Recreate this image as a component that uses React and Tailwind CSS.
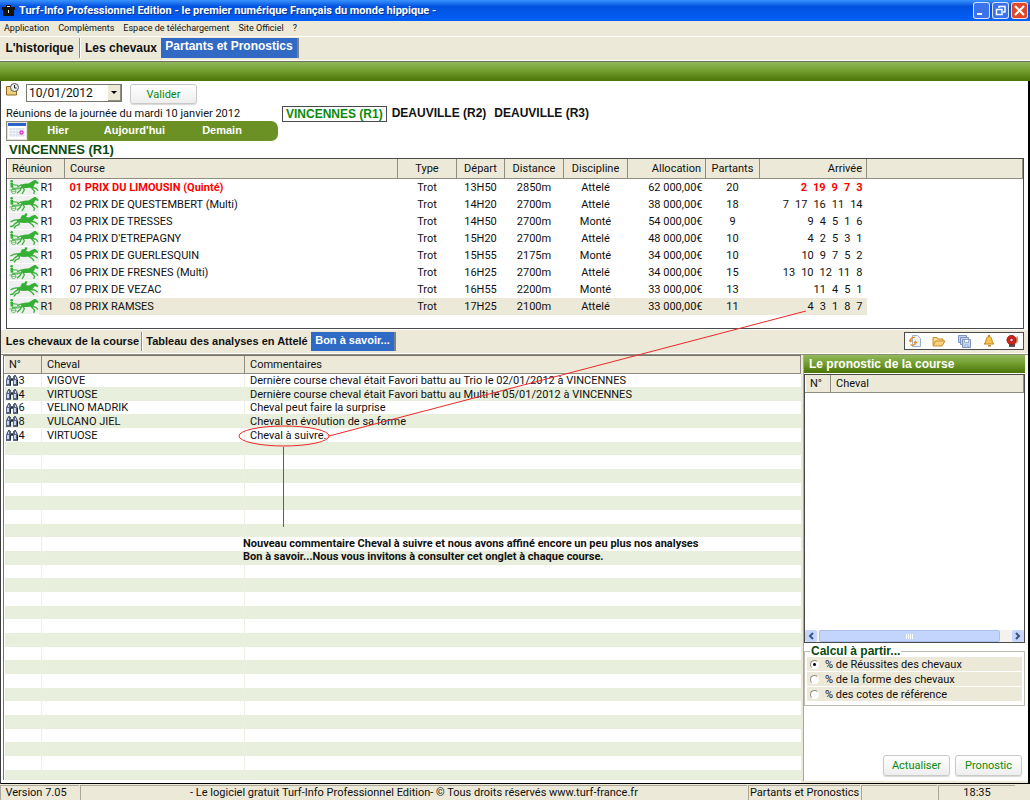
import React, { useState } from "react";

const RACES = [
  { n: "01 PRIX DU LIMOUSIN (Quinté)", start: "13H50", dist: "2850m", disc: "Attelé", purse: "62 000,00€", runners: "20", finish: [2, 19, 9, 7, 3], hot: true },
  { n: "02 PRIX DE QUESTEMBERT (Multi)", start: "14H20", dist: "2700m", disc: "Attelé", purse: "38 000,00€", runners: "18", finish: [7, 17, 16, 11, 14] },
  { n: "03 PRIX DE TRESSES", start: "14H50", dist: "2700m", disc: "Monté", purse: "54 000,00€", runners: "9", finish: [9, 4, 5, 1, 6] },
  { n: "04 PRIX D'ETREPAGNY", start: "15H20", dist: "2700m", disc: "Attelé", purse: "48 000,00€", runners: "10", finish: [4, 2, 5, 3, 1] },
  { n: "05 PRIX DE GUERLESQUIN", start: "15H55", dist: "2175m", disc: "Monté", purse: "34 000,00€", runners: "10", finish: [10, 9, 7, 5, 2] },
  { n: "06 PRIX DE FRESNES (Multi)", start: "16H25", dist: "2700m", disc: "Attelé", purse: "34 000,00€", runners: "15", finish: [13, 10, 12, 11, 8] },
  { n: "07 PRIX DE VEZAC", start: "16H55", dist: "2200m", disc: "Monté", purse: "33 000,00€", runners: "13", finish: [11, 4, 5, 1] },
  { n: "08 PRIX RAMSES", start: "17H25", dist: "2100m", disc: "Attelé", purse: "33 000,00€", runners: "11", finish: [4, 3, 1, 8, 7], selected: true },
];

const NOTES = [
  ["3", "VIGOVE", "Dernière course cheval était Favori battu au Trio le 02/01/2012 à VINCENNES"],
  ["4", "VIRTUOSE", "Dernière course cheval était Favori battu au Multi le 05/01/2012 à VINCENNES"],
  ["6", "VELINO MADRIK", "Cheval peut faire la surprise"],
  ["8", "VULCANO JIEL", "Cheval en évolution de sa forme"],
  ["4", "VIRTUOSE", "Cheval à suivre."],
];

const BASES = ["% de Réussites des chevaux", "% de la forme des chevaux", "% des cotes de référence"];

function Trotter() {
  return (
    <svg viewBox="0 0 90 48" className="block h-4 w-[30px] bg-[#f0f0f0]" aria-hidden="true">
      <g fill="#35b035">
        <circle cx="8" cy="7" r="4" />
        <ellipse cx="53" cy="20" rx="18" ry="6.500" />
        <path d="M56 15L70 7L76 3L80 3L89 11L87 15L79 13L72 26L62 26Z" />
      </g>
      <g fill="none" stroke="#35b035" strokeLinejoin="round">
        <path d="M8 12L9 26" strokeWidth="8" />
        <path d="M10 17L28 19M9 28L30 27L58 25" strokeWidth="3" />
        <path d="M38 17L30 21L25 24" strokeWidth="4" />
        <path d="M41 22L46 33L39 45M39 22L34 34L24 43M67 24L81 28L87 35M66 25L77 37L74 44" strokeWidth="4" />
        <circle cx="14" cy="37" r="7" strokeWidth="2" />
        <path d="M7 37H21M1 33L34 29" strokeWidth="2" />
      </g>
    </svg>
  );
}

function Rider() {
  return (
    <svg viewBox="0 0 90 48" className="block h-4 w-[30px] bg-[#f0f0f0]" aria-hidden="true">
      <g fill="#35b035">
        <circle cx="51" cy="5" r="4" />
        <path d="M34 16L39 7L48 6L53 12L62 15L60 18L50 17L52 26L46 26L42 20Z" />
        <ellipse cx="45" cy="23" rx="22" ry="7" />
        <path d="M54 17L68 9L75 6L79 6L88 14L86 18L77 16L68 28L56 29Z" />
      </g>
      <g fill="none" stroke="#35b035" strokeWidth="4" strokeLinejoin="round">
        <path d="M26 20L14 22L4 27" />
        <path d="M28 25L18 32L12 39L3 41M31 27L30 35L20 39L15 46" />
        <path d="M62 25L77 27L86 34M59 27L70 35L75 42" />
      </g>
    </svg>
  );
}

function Binoculars() {
  return (
    <svg viewBox="0 0 14 12" className="block h-3 w-[14px] shrink-0" aria-hidden="true">
      <path d="M3 1h2v1h1v2h2V2h1V1h2v1l1 1 1 3v6H8V7H6v5H1V6l1-3 1-1z" fill="#59647c" />
      <path d="M2 6h2v4H2zM9 6h2v4H9zM3 3h1v2H3zM10 3h1v2h-1z" fill="#c4d5f5" />
      <path d="M5 6h1v5H5zM12 6h1v5h-1zM6 5h2v1H6z" fill="#1d2432" />
    </svg>
  );
}

function CaptionButton({ children, label, tone }) {
  return (
    <button type="button" aria-label={label} className={`flex h-[17px] w-[17px] items-center justify-center rounded-[3px] border border-white/80 ${tone}`}>
      <svg viewBox="0 0 13 13" className="h-[13px] w-[13px]" fill="none" stroke="#fff" strokeWidth="2">
        {children}
      </svg>
    </button>
  );
}

const FRAME = "border border-[#4a4a4a]";
const HEAD = "border-r border-b border-[#8f8d80] border-l border-l-white font-normal";
const GREEN = "bg-linear-to-b from-[#92b95a] via-[#709c2c] to-[#4c7404]";
const BTN = "rounded-[3px] border border-[#c9c9c9] bg-linear-to-b from-white to-[#eeeeee] text-[#0a8a0a] shadow-[0_1px_1px_#d8d8d8]";
const ACTIVE = "bg-[#316ac5] text-white border-r-2 border-[#77818f]";
const BOLD = "font-['Liberation_Sans',sans-serif] font-bold";

export default function App() {
  const [base, setBase] = useState(0);
  const rows = Array.from({ length: 30 }, (_, i) => NOTES[i] || ["", "", ""]);

  return (
    <div className="relative flex min-h-screen flex-col overflow-hidden bg-[#ece9d8] font-[Roboto,sans-serif] text-[11px] leading-[13px] text-[#111]">
      <header className="flex h-[21px] items-center gap-1 bg-linear-to-b from-[#3a93ff] via-[#0352de] via-30% to-[#0060f8] pr-[2px] pl-[2px] text-white">
        <svg viewBox="0 0 13 11" className="h-[11px] w-[13px]" aria-hidden="true">
          <path d="M0 2h4V0h5v2h4v3H0zM1 5h11v6H1z" fill="#16130e" />
          <path d="M5 1h3v1H5zM6 5h1v3H6z" fill="#e8e2c8" />
        </svg>
        <h1 className="flex-1 text-[11px] font-bold whitespace-nowrap [text-shadow:1px_1px_0_#06308c]">
          Turf-Info Professionnel Edition - le premier numérique Français du monde hippique -
        </h1>
        <div className="flex gap-[2px]">
          <CaptionButton label="Réduire" tone="bg-[#3d73ea]"><path d="M2 10h5" /></CaptionButton>
          <CaptionButton label="Restaurer" tone="bg-[#3d73ea]"><path d="M5 4V2.500h6V8H9M2.500 5.500h5.500v5H2.500z" strokeWidth="1.400" /></CaptionButton>
          <CaptionButton label="Fermer" tone="bg-[#e0482a]"><path d="M2 2l9 9M11 2l-9 9" /></CaptionButton>
        </div>
      </header>

      <nav className="flex h-4 items-center gap-[9px] border-b border-white pl-1 text-[9px] whitespace-nowrap">
        {["Application", "Complèments", "Espace de téléchargement", "Site Officiel", "?"].map((m) => (
          <button type="button" key={m}>{m}</button>
        ))}
      </nav>

      <div className={`flex h-[24px] items-start border-b border-white pt-px text-[12px] whitespace-nowrap ${BOLD}`}>
        <button type="button" className="h-[20px] w-[80px] border-r border-[#8f8d80] text-center">L'historique</button>
        <button type="button" className="h-[20px] w-[81px] border-l border-white text-center">Les chevaux</button>
        <button type="button" className={`h-[20px] w-[138px] pb-[3px] text-center ${ACTIVE}`}>Partants et Pronostics</button>
      </div>
      <div className={`h-5 border-t border-[#6f7060] ${GREEN}`} />

      <main className="flex flex-1 flex-col border-r-2 border-l border-black border-l-[#3c3c3c] bg-white">
        <div className="flex h-[77px] pl-[5px]">
          <section className="w-[276px]">
            <div className="flex items-start gap-[7px] pt-[2px]">
              <svg viewBox="0 0 13 13" className="h-[13px] w-[13px]" aria-hidden="true">
                <path d="M.5 3.500h4l1 1.500h5v7H.5z" fill="#f2cf79" stroke="#8a6a24" />
                <circle cx="8.500" cy="4.500" r="4" fill="#e9eef5" stroke="#555" />
                <path d="M8.500 2v3h2" fill="none" stroke="#222" />
              </svg>
              <div className="relative flex items-start gap-2 pt-px">
                <select aria-label="Date" className="h-[18px] w-[96px] appearance-none border border-[#7a786c] bg-white pl-[2px] text-[12px] leading-4">
                  <option>10/01/2012</option>
                </select>
                <span className="pointer-events-none absolute top-[2px] left-[82px] flex h-4 w-[13px] items-center justify-center border-r border-b border-[#8f8d80] bg-[#ece9d8]">
                  <svg viewBox="0 0 6 3" className="h-[3px] w-[6px]"><path d="M0 0h6L3 3z" /></svg>
                </span>
                <button type="button" className={`h-[20px] w-[67px] ${BTN}`}>Valider</button>
              </div>
            </div>
            <p className="pt-[2px] leading-[15px] whitespace-nowrap">Réunions de la journée du mardi 10 janvier 2012</p>
            <div className="flex h-[20px] w-[272px]">
              <span className="flex w-[22px] items-center justify-center border border-[#8f8d80] bg-[#e4e2d8]">
                <svg viewBox="0 0 18 16" className="h-4 w-[18px]" aria-hidden="true">
                  <path d="M0 0h18v16H0z" fill="#fff" />
                  <path d="M0 0h18v3H0z" fill="#2b62c9" />
                  <path d="M3 5v9M6 5v9M9 5v9M12 5v9M15 5v9M1 6h16M1 9h16M1 12h16" stroke="#d3d8e8" fill="none" />
                  <circle cx="13.500" cy="9.500" r="1.500" fill="#fff" stroke="#e040d0" strokeWidth="1.500" />
                </svg>
              </span>
              <div className={`flex flex-1 items-center rounded-r-[7px] bg-[#6b9023] pb-px text-white ${BOLD}`}>
                <button type="button" className="w-[60px]">Hier</button>
                <button type="button" className="w-[93px]">Aujourd'hui</button>
                <button type="button" className="w-[82px]">Demain</button>
              </div>
            </div>
            <h2 className={`pl-[3px] text-[13px] leading-[17px] text-[#0b4a0b] ${BOLD}`}>VINCENNES (R1)</h2>
          </section>
          <div className={`flex items-start gap-[5px] pt-[25px] text-[12px] leading-[14px] ${BOLD}`}>
            <button type="button" className={`px-[3px] text-[#0b8a0b] ${FRAME}`}>VINCENNES (R1)</button>
            <button type="button" className="pr-[3px]">DEAUVILLE (R2)</button>
            <button type="button">DEAUVILLE (R3)</button>
          </div>
        </div>

        <div className={`mr-[4px] ml-[5px] h-[171px] ${FRAME}`}>
          <table className="w-full table-fixed border-collapse whitespace-nowrap">
            <colgroup>
              <col className="w-[57px]" /><col className="w-[333px]" /><col className="w-[59px]" /><col className="w-[48px]" />
              <col className="w-[59px]" /><col className="w-[64px]" /><col className="w-[78px]" /><col className="w-[54px]" />
              <col className="w-[107px]" /><col />
            </colgroup>
            <thead>
              <tr className="h-[19px] bg-[#ece9d8]">
                <th className={`pl-1 text-left ${HEAD}`}>Réunion</th>
                <th className={`pl-[5px] text-left ${HEAD}`}>Course</th>
                <th className={HEAD}>Type</th>
                <th className={HEAD}>Départ</th>
                <th className={HEAD}>Distance</th>
                <th className={HEAD}>Discipline</th>
                <th className={`pr-1 text-right ${HEAD}`}>Allocation</th>
                <th className={HEAD}>Partants</th>
                <th className={`pr-1 text-right ${HEAD}`}>Arrivée</th>
                <th className={HEAD}></th>
              </tr>
            </thead>
            <tbody>
              {RACES.map((r) => {
                const cell = r.selected ? "bg-[#ece9d8]" : "";
                const hot = r.hot ? "font-bold text-[#f00]" : "";
                return (
                  <tr key={r.n} className="h-[17px] text-center">
                    <td className="p-0">
                      <div className="flex items-center pl-px">
                        {r.disc === "Monté" ? <Rider /> : <Trotter />}
                        <span className={`flex-1 pl-[2px] text-left leading-[17px] ${cell}`}>R1</span>
                      </div>
                    </td>
                    <td className={`pl-[5px] text-left ${cell} ${hot}`}>{r.n}</td>
                    <td className={cell}>Trot</td>
                    <td className={cell}>{r.start}</td>
                    <td className={cell}>{r.dist}</td>
                    <td className={cell}>{r.disc}</td>
                    <td className={`pr-[3px] text-right ${cell}`}>{r.purse}</td>
                    <td className={cell}>{r.runners}</td>
                    <td className={`pr-1 ${cell} ${hot}`}>
                      <div className="flex justify-end gap-[6px]">
                        {r.finish.map((f) => <span key={f}>{f}</span>)}
                      </div>
                    </td>
                    <td></td>
                  </tr>
                );
              })}
            </tbody>
          </table>
        </div>

        <div className={`mt-px flex h-[24px] items-start justify-between border-b border-white bg-[#ece9d8] pt-[2px] pr-[4px] whitespace-nowrap ${BOLD}`}>
          <div className="flex">
            <button type="button" className="h-[19px] w-[141px] border-r border-[#8f8d80] pl-[3px] text-center">Les chevaux de la course</button>
            <button type="button" className="h-[19px] w-[169px] border-l border-white text-center">Tableau des analyses en Attelé</button>
            <button type="button" className={`h-[19px] w-[85px] pb-[2px] text-center ${ACTIVE}`}>Bon à savoir...</button>
          </div>
          <div className={`flex h-[18px] w-[120px] items-center justify-between bg-white px-1 ${FRAME}`}>
            <button type="button" aria-label="Actualiser les données">
              <svg viewBox="0 0 12 12" className="h-3 w-3"><path d="M3.500.5h5l3 3v8h-8z" fill="#eef3fb" stroke="#9fb0cc" /><path d="M6 2.500C3 2 1 4 1.500 6M0 5l1.500 1.500L3 5M1.500 9.500c2 1.500 5 .5 5-2M5 8l1.500-1.500L8 8" fill="none" stroke="#e0912a" strokeWidth="1.300" /></svg>
            </button>
            <button type="button" aria-label="Ouvrir">
              <svg viewBox="0 0 14 11" className="h-[11px] w-[14px]"><path d="M1 9.500v-8h4l1 1.500h5v2" fill="#fbdc93" stroke="#c98c2b" /><path d="M1 10l2.500-5h9.500l-3 5z" fill="#fdd27a" stroke="#c98c2b" /></svg>
            </button>
            <button type="button" aria-label="Enregistrer tout">
              <svg viewBox="0 0 14 13" className="h-[13px] w-[14px]" fill="#c4d4f0" stroke="#7f95bf"><path d="M.5.5h8v7h-8z" /><path d="M2.500 2.500h8v7h-8z" /><path d="M4.500 4.500h8v8h-8z" /><path d="M6.500 4.500h4v3h-4zM7 10h3v2H7z" fill="#fff" strokeWidth=".7" /></svg>
            </button>
            <button type="button" aria-label="Alerte">
              <svg viewBox="0 0 12 12" className="h-3 w-3"><path d="M1 9c2-1 1.500-3 2.500-5.500C4 2 5 1.500 6 1.500S8 2 8.500 3.500C9.500 6 9 8 11 9z" fill="#f7c34c" stroke="#bf8420" /><path d="M5 0h2v2H5zM5 10h3v1.500H5z" fill="#bf8420" /></svg>
            </button>
            <button type="button" aria-label="Alarme">
              <svg viewBox="0 0 13 12" className="h-3 w-[13px]"><path d="M3 9h6v3H3z" fill="#555" /><path d="M9 3l3-2v6l-3 3z" fill="#d9a06a" /><circle cx="5.500" cy="5" r="4.500" fill="#e0221c" stroke="#8f1410" /><circle cx="5.500" cy="5" r="1.800" fill="#f9c9c0" stroke="#701010" strokeWidth=".8" /></svg>
            </button>
          </div>
        </div>

        <div className="flex flex-1 border-t border-b border-t-[#8f8d80] border-b-black bg-[#ece9d8]">
          <div className="min-w-0 flex-1 bg-white pl-[2px]">
            <div className="mb-[3px] border-t border-l border-[#77756a]">
              <table className="w-full table-fixed border-collapse whitespace-nowrap">
                <colgroup><col className="w-[37px]" /><col className="w-[203px]" /><col /></colgroup>
                <thead>
                  <tr className="h-[17px] bg-[#ece9d8] text-left">
                    <th className={`p-0 pl-1 ${HEAD}`}>N°</th>
                    <th className={`p-0 pl-[5px] ${HEAD}`}>Cheval</th>
                    <th className={`p-0 pl-[5px] ${HEAD}`}>Commentaires</th>
                  </tr>
                </thead>
                <tbody>
                  {rows.map(([num, horse, note], i) => (
                    <tr key={i} className="h-[14px] leading-[13px] odd:bg-white even:bg-[#e8efdc] nth-[3n]:h-[13px] last:h-[10px]!">
                      <td className="border-r border-[#efeee2] p-0">{num && <div className="flex items-center"><Binoculars />{num}</div>}</td>
                      <td className="border-r border-[#efeee2] p-0 pl-[5px]">{horse}</td>
                      <td className="p-0 pl-[5px]">{note}</td>
                    </tr>
                  ))}
                </tbody>
              </table>
            </div>
          </div>

          <aside className="mb-[2px] ml-[2px] flex w-[225px] flex-col border-l border-[#aca899] bg-white pr-[3px]">
            <h2 className={`pl-[5px] text-[12px] leading-[18px] text-white ${GREEN} ${BOLD}`}>Le pronostic de la course</h2>
            <div className={`mt-px flex h-[269px] flex-col ${FRAME}`}>
              <table className="w-full table-fixed border-collapse">
                <colgroup><col className="w-[25px]" /><col /></colgroup>
                <thead>
                  <tr className="h-[17px] bg-[#ece9d8] text-left">
                    <th className={`p-0 pl-1 ${HEAD}`}>N°</th>
                    <th className={`p-0 pl-[5px] ${HEAD}`}>Cheval</th>
                  </tr>
                </thead>
              </table>
              <div className="mt-auto flex h-[12px] bg-[#f3f2ec]">
                <button type="button" aria-label="Défiler à gauche" className="flex w-3 items-center justify-center rounded-[2px] bg-[#c6d6fb]">
                  <svg viewBox="0 0 6 8" className="h-2 w-[6px]" fill="none" stroke="#3d5488" strokeWidth="2"><path d="M5 1L2 4l3 3" /></svg>
                </button>
                <div className="mx-[2px] flex w-[181px] items-center justify-center gap-px rounded-[2px] border border-[#a9bff0] bg-[#c3d5fd]">
                  <i className="h-[5px] w-px bg-white" /><i className="h-[5px] w-px bg-white" /><i className="h-[5px] w-px bg-white" /><i className="h-[5px] w-px bg-white" />
                </div>
                <button type="button" aria-label="Défiler à droite" className="ml-auto flex w-3 items-center justify-center rounded-[2px] bg-[#c6d6fb]">
                  <svg viewBox="0 0 6 8" className="h-2 w-[6px]" fill="none" stroke="#3d5488" strokeWidth="2"><path d="M1 1l3 3-3 3" /></svg>
                </button>
              </div>
            </div>
            <fieldset className="mt-[2px] border border-[#bdbbae] px-[2px] pb-[3px]">
              <legend className={`ml-[3px] px-px text-[12px] leading-[12px] text-[#0b4a0b] ${BOLD}`}>Calcul à partir...</legend>
              {BASES.map((b, i) => (
                <label key={b} className="mb-px flex h-[14px] items-center gap-[6px] bg-[#ece9d8] pl-[3px]">
                  <input
                    type="radio"
                    name="base"
                    checked={base === i}
                    onChange={() => setBase(i)}
                    className="h-[9px] w-[9px] appearance-none rounded-full border border-[#8f8d80] border-r-white border-b-white bg-white checked:bg-[radial-gradient(circle,#111_0_1px,#fff_2px)]"
                  />
                  {b}
                </label>
              ))}
            </fieldset>
            <div className="mt-auto flex justify-end gap-[5px] pr-[3px] pb-[5px]">
              <button type="button" className={`h-[21px] w-[67px] ${BTN}`}>Actualiser</button>
              <button type="button" className={`h-[21px] w-[67px] ${BTN}`}>Pronostic</button>
            </div>
          </aside>
        </div>
      </main>

      <footer className="flex h-4 gap-px pt-px pr-[15px] text-center whitespace-nowrap">
        <span className="w-[79px] border-t border-l border-[#aca899] pr-2">Version 7.05</span>
        <span className="flex-1 border-t border-l border-[#aca899]">- Le logiciel gratuit Turf-Info Professionnel Edition- © Tous droits réservés www.turf-france.fr</span>
        <span className="w-[112px] border-t border-l border-[#aca899]">Partants et Pronostics</span>
        <span className="w-[76px] border-t border-l border-[#aca899]" />
        <span className="w-[77px] border-t border-l border-[#aca899]">18:35</span>
      </footer>

      <svg className="pointer-events-none absolute top-0 left-0 h-[800px] w-[1030px]" fill="none" aria-hidden="true">
        <ellipse cx="284" cy="436" rx="45" ry="10" stroke="#f0282a" />
        <path d="M329 436L806 311" stroke="#f0282a" />
        <path d="M283.500 447v80" stroke="#e0282a" />
      </svg>
      <p className="pointer-events-none absolute top-[537px] left-[243px] font-bold whitespace-nowrap">
        Nouveau commentaire Cheval à suivre et nous avons affiné encore un peu plus nos analyses
        <br />
        Bon à savoir...Nous vous invitons à consulter cet onglet à chaque course.
      </p>
    </div>
  );
}
